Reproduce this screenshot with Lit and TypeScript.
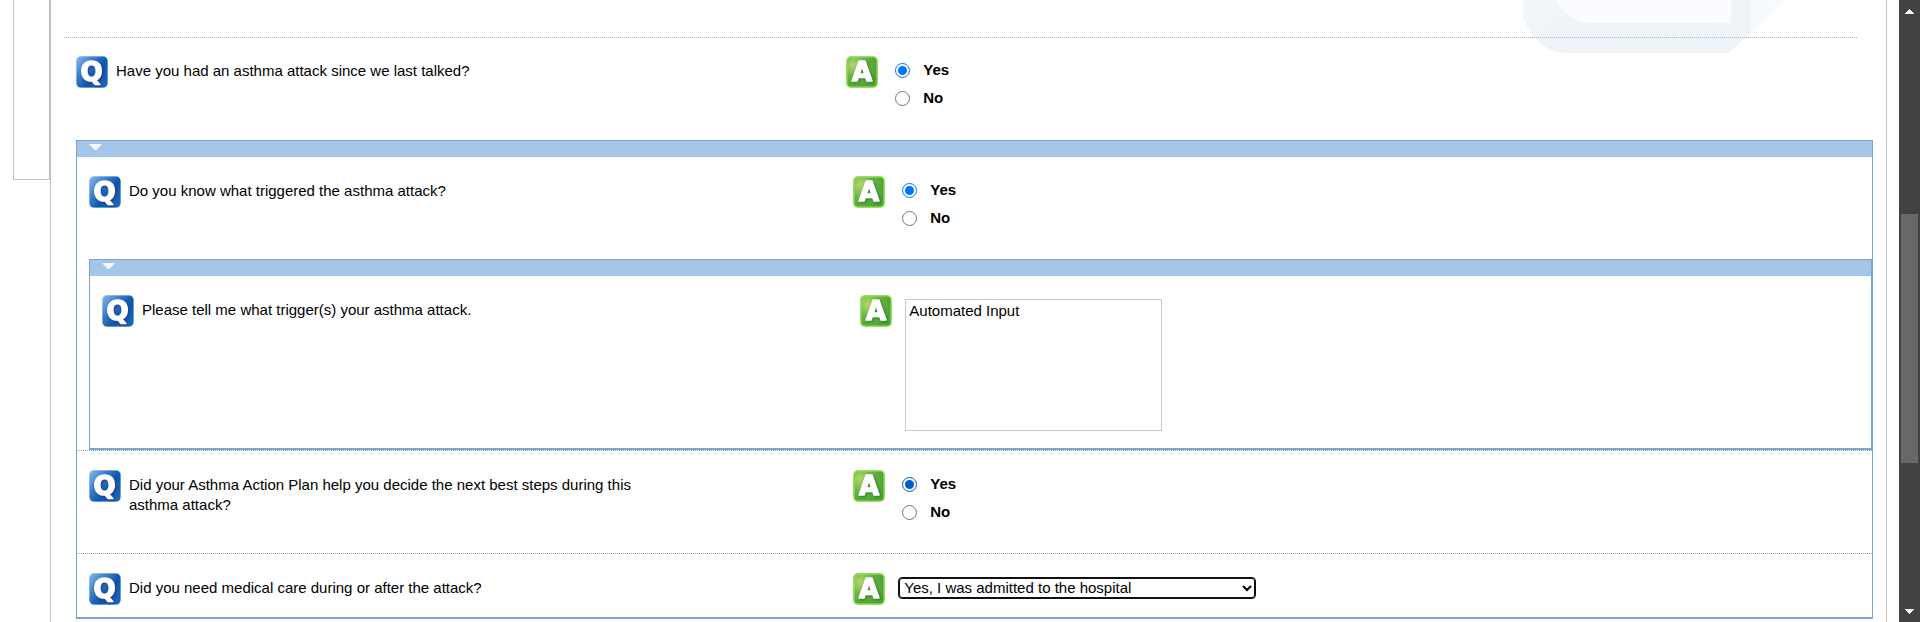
import { LitElement, html, svg, css, nothing } from "lit";
import { customElement, property } from "lit/decorators.js";

@customElement("badge-icon")
class BadgeIcon extends LitElement {
  @property() kind: "q" | "a" = "q";

  static styles = css`
    :host { display: block; flex: none; width: 32px; height: 32px; }
    svg { display: block; }
    .letter {
      font-family: "DejaVu Sans", Verdana, sans-serif;
      font-weight: bold;
      font-size: 26px;
      text-anchor: middle;
      stroke-linejoin: round;
      fill: #fff;
      stroke: #fff;
      stroke-width: 1.5;
    }
    .q { filter: drop-shadow(1px 1px 1px #26338f); }
    .a { filter: drop-shadow(1px 1px 1px #2f7a28); }
  `;

  render() {
    const q = this.kind === "q";
    return html`<svg width="32" height="32" viewBox="0 0 32 32">
      ${q
        ? svg`<defs><linearGradient id="g" x1="0" y1="0" x2="1" y2="0.8">
            <stop offset="0" stop-color="#86b8ee"/><stop offset="0.35" stop-color="#3c80cb"/>
            <stop offset="0.65" stop-color="#0c57a8"/><stop offset="1" stop-color="#1a66b6"/></linearGradient></defs>
          <rect x="0" y="0" width="32" height="32" rx="5" fill="#b9dcf2"/>
          <rect x="0.5" y="0.5" width="31" height="31" rx="4.5" fill="url(#g)"/>
          <text class="letter q" x="15.5" y="25">Q</text>`
        : svg`<defs><radialGradient id="g" cx="0.2" cy="0.25" r="0.85">
            <stop offset="0" stop-color="#b5d56f"/><stop offset="0.5" stop-color="#68b544"/>
            <stop offset="1" stop-color="#4ba336"/></radialGradient></defs>
          <rect x="0" y="0" width="32" height="32" rx="5" fill="#9be05c"/>
          <rect x="1.5" y="1.5" width="29" height="29" rx="3.5" fill="url(#g)"/>
          <text class="letter a" x="16" y="25">A</text>`}
    </svg>`;
  }
}

interface Question {
  id: string;
  text: string;
  kind: "choice" | "text" | "select";
  variant?: string;
}

@customElement("app-root")
class AppRoot extends LitElement {
  static styles = css`
    :host {
      display: block;
      font: 15px/20px "Liberation Sans", Arial, sans-serif;
      color: #000;
      background: #fff;
    }
    .page { display: flex; align-items: stretch; min-height: 100vh; }
    .side {
      flex: none;
      align-self: flex-start;
      box-sizing: border-box;
      width: 37px;
      height: 180px;
      margin-left: 13px;
      border: 1px solid #c0c0c0;
      border-top: 0;
    }
    .panel {
      position: relative;
      flex: 1;
      min-width: 0;
      box-sizing: border-box;
      padding: 37px 13px 0;
      margin-right: 12px;
      border: solid #c0c0c0;
      border-width: 0 1px;
    }
    .watermark { position: absolute; top: 0; right: 99px; }
    .content { position: relative; }
    .rule { height: 0; margin: 0 16px 0 0; border: 0; border-top: 1px dotted #92bbe0; }

    .group { margin-left: 12px; border: 1px solid #7fa4c9; border-bottom-width: 2px; }
    .group-head { display: flex; height: 16px; padding: 3px 12px; box-sizing: border-box; background: #a2c5e8; }
    .toggle { display: block; padding: 0; border: 0; background: none; width: 13px; height: 6px; }
    .toggle svg { display: block; }

    .row { display: grid; grid-template-columns: 3fr 4fr; padding: 19px 0 27px; }
    .row.first { padding: 18px 0 28px; }
    .row.note { padding-bottom: 17px; }
    .row.pick { padding-bottom: 12px; }
    .row.ruled { border-top: 1px dotted #7fa4c9; }
    .ask { display: flex; gap: 8px; padding-left: 12px; }
    .ask-text { max-width: 520px; margin-top: 5px; }
    .reply { display: flex; gap: 13px; padding-left: 7px; }
    .choices { margin: 0; padding: 0 0 0 4px; border: 0; min-width: 0; }
    .choice { display: flex; align-items: center; gap: 13px; height: 28px; font-weight: bold; }
    .radio { width: 15px; height: 15px; margin: 1px 0 0; accent-color: #0075ff; }
    .hovered .radio { accent-color: #005cc8; }
    .area {
      box-sizing: border-box;
      width: 257px;
      height: 132px;
      margin-top: 4px;
      padding: 1px 3px;
      border: 1px solid #c8c8c8;
      font: inherit;
      color: #000;
      resize: none;
      outline: 0;
    }
    .select {
      box-sizing: border-box;
      width: 358px;
      height: 22px;
      margin-top: 4px;
      padding: 0 3px 1px 1px;
      border: 1px solid #101010;
      border-radius: 4px;
      box-shadow: inset 0 0 0 1px #101010;
      background: #fff;
      font: inherit;
      color: #000;
      outline: 0;
    }

    .scroll { flex: none; display: flex; flex-direction: column; width: 21px; background: #424242; }
    .step { height: 22px; padding: 0; border: 0; background: none; display: flex; align-items: center; justify-content: center; }
    .before { flex: 192; }
    .thumb { flex: 249; margin: 0 2px; background: #686868; }
    .after { flex: 137; }
  `;

  private answer(q: Question) {
    if (q.kind === "text")
      return html`<textarea class="area" id=${q.id} .value=${"Automated Input"}></textarea>`;
    if (q.kind === "select")
      return html`<select class="select" id=${q.id}>
        <option selected>Yes, I was admitted to the hospital</option>
      </select>`;
    return html`<fieldset class="choices" aria-labelledby=${q.id + "-text"}>
      ${["Yes", "No"].map(
        (c) => html`<label class="choice"
          ><input class="radio" type="radio" name=${q.id} value=${c} ?checked=${c === "Yes"} />${c}</label
        >`
      )}
    </fieldset>`;
  }

  private row(q: Question) {
    return html`<div class="row ${q.variant ?? nothing}">
      <div class="ask">
        <badge-icon kind="q"></badge-icon>
        ${q.kind === "choice"
          ? html`<div class="ask-text" id=${q.id + "-text"}>${q.text}</div>`
          : html`<label class="ask-text" for=${q.id}>${q.text}</label>`}
      </div>
      <div class="reply"><badge-icon kind="a"></badge-icon>${this.answer(q)}</div>
    </div>`;
  }

  private group(body: unknown) {
    return html`<section class="group">
      <div class="group-head">
        <button class="toggle" aria-label="Collapse">
          <svg width="13" height="6" viewBox="0 0 13 6"><path d="M0 0H13L7.5 6H5.5Z" fill="#f0f8ff" /></svg>
        </button>
      </div>
      ${body}
    </section>`;
  }

  render() {
    return html`<div class="page">
      <aside class="side"></aside>
      <main class="panel">
        <svg class="watermark" width="264" height="53" viewBox="0 0 264 53" aria-hidden="true">
          <defs>
            <linearGradient id="ring" x1="0" y1="0" x2="1" y2="0.3">
              <stop offset="0" stop-color="#f3f6fa" /><stop offset="0.4" stop-color="#eff3f8" />
              <stop offset="0.7" stop-color="#eef3f6" /><stop offset="1" stop-color="#eff4f8" />
            </linearGradient>
            <linearGradient id="tail" x1="0" y1="0" x2="1" y2="0">
              <stop offset="0" stop-color="#f5fafe" /><stop offset="1" stop-color="#fafcff" />
            </linearGradient>
          </defs>
          <path d="M228 0H263L228 33Z" fill="url(#tail)" />
          <path d="M0 0V17C8 38 22 53 45 53H205L228 33V0Z" fill="url(#ring)" />
          <path d="M33 0C40 14 54 23 68 23H208V0Z" fill="#fafcff" />
        </svg>
        <div class="content">
          <hr class="rule" />
          ${this.row({ id: "attack", text: "Have you had an asthma attack since we last talked?", kind: "choice", variant: "first" })}
          ${this.group(html`
            ${this.row({ id: "known", text: "Do you know what triggered the asthma attack?", kind: "choice", variant: "" })}
            ${this.group(
              this.row({ id: "trigger", text: "Please tell me what trigger(s) your asthma attack.", kind: "text", variant: "note" })
            )}
            ${this.row({
              id: "plan",
              text: "Did your Asthma Action Plan help you decide the next best steps during this asthma attack?",
              kind: "choice",
              variant: "ruled hovered",
            })}
            ${this.row({ id: "care", text: "Did you need medical care during or after the attack?", kind: "select", variant: "ruled pick" })}
          `)}
        </div>
      </main>
      <div class="scroll">
        <button class="step" aria-label="Scroll up">
          <svg width="9" height="5" viewBox="0 0 9 5" shape-rendering="crispEdges"><path d="M4 0H5V1H6V2H7V3H8V4H9V5H0V4H1V3H2V2H3V1H4Z" fill="#fff" /></svg>
        </button>
        <div class="before"></div>
        <div class="thumb"></div>
        <div class="after"></div>
        <button class="step" aria-label="Scroll down">
          <svg width="9" height="5" viewBox="0 0 9 5" shape-rendering="crispEdges"><path d="M0 0H9V1H8V2H7V3H6V4H5V5H4V4H3V3H2V2H1V1H0Z" fill="#fff" /></svg>
        </button>
      </div>
    </div>`;
  }
}
